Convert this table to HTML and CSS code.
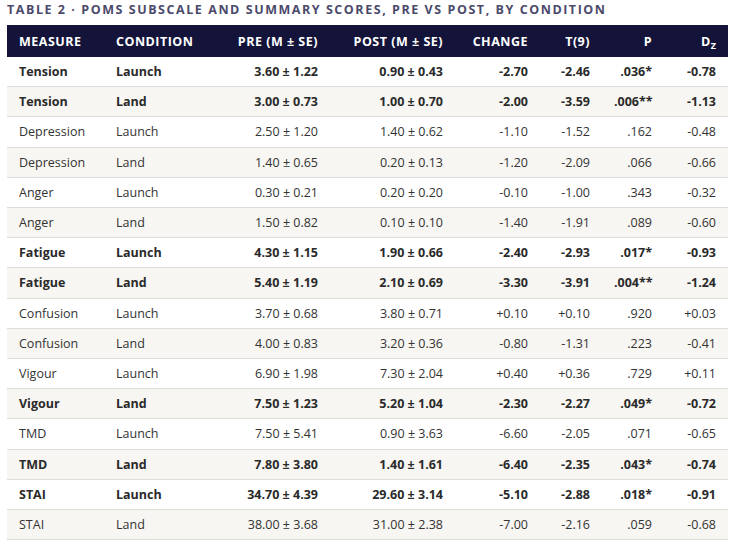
FILE: index.html
```html
<!DOCTYPE html>
<html>
<head>
<meta charset="utf-8">
<link rel="stylesheet" href="styles.css">
</head>
<body>
<div class="wrap">
<h1 class="title">TABLE 2 · POMS SUBSCALE AND SUMMARY SCORES, PRE VS POST, BY CONDITION</h1>
<table class="data">
<colgroup>
<col class="c1"><col class="c2"><col class="c3"><col class="c4"><col class="c5"><col class="c6"><col class="c7"><col class="c8">
</colgroup>
<thead>
<tr><th class="l">MEASURE</th><th class="l">CONDITION</th><th>PRE (M ± SE)</th><th>POST (M ± SE)</th><th>CHANGE</th><th>T(9)</th><th>P</th><th>D<sub>Z</sub></th></tr>
</thead>
<tbody>
<tr class="sig"><td class="l">Tension</td><td class="l">Launch</td><td>3.60 ± 1.22</td><td>0.90 ± 0.43</td><td>-2.70</td><td>-2.46</td><td>.036*</td><td>-0.78</td></tr>
<tr class="sig"><td class="l">Tension</td><td class="l">Land</td><td>3.00 ± 0.73</td><td>1.00 ± 0.70</td><td>-2.00</td><td>-3.59</td><td>.006**</td><td>-1.13</td></tr>
<tr><td class="l">Depression</td><td class="l">Launch</td><td>2.50 ± 1.20</td><td>1.40 ± 0.62</td><td>-1.10</td><td>-1.52</td><td>.162</td><td>-0.48</td></tr>
<tr><td class="l">Depression</td><td class="l">Land</td><td>1.40 ± 0.65</td><td>0.20 ± 0.13</td><td>-1.20</td><td>-2.09</td><td>.066</td><td>-0.66</td></tr>
<tr><td class="l">Anger</td><td class="l">Launch</td><td>0.30 ± 0.21</td><td>0.20 ± 0.20</td><td>-0.10</td><td>-1.00</td><td>.343</td><td>-0.32</td></tr>
<tr><td class="l">Anger</td><td class="l">Land</td><td>1.50 ± 0.82</td><td>0.10 ± 0.10</td><td>-1.40</td><td>-1.91</td><td>.089</td><td>-0.60</td></tr>
<tr class="sig"><td class="l">Fatigue</td><td class="l">Launch</td><td>4.30 ± 1.15</td><td>1.90 ± 0.66</td><td>-2.40</td><td>-2.93</td><td>.017*</td><td>-0.93</td></tr>
<tr class="sig"><td class="l">Fatigue</td><td class="l">Land</td><td>5.40 ± 1.19</td><td>2.10 ± 0.69</td><td>-3.30</td><td>-3.91</td><td>.004**</td><td>-1.24</td></tr>
<tr><td class="l">Confusion</td><td class="l">Launch</td><td>3.70 ± 0.68</td><td>3.80 ± 0.71</td><td>+0.10</td><td>+0.10</td><td>.920</td><td>+0.03</td></tr>
<tr><td class="l">Confusion</td><td class="l">Land</td><td>4.00 ± 0.83</td><td>3.20 ± 0.36</td><td>-0.80</td><td>-1.31</td><td>.223</td><td>-0.41</td></tr>
<tr><td class="l">Vigour</td><td class="l">Launch</td><td>6.90 ± 1.98</td><td>7.30 ± 2.04</td><td>+0.40</td><td>+0.36</td><td>.729</td><td>+0.11</td></tr>
<tr class="sig"><td class="l">Vigour</td><td class="l">Land</td><td>7.50 ± 1.23</td><td>5.20 ± 1.04</td><td>-2.30</td><td>-2.27</td><td>.049*</td><td>-0.72</td></tr>
<tr><td class="l">TMD</td><td class="l">Launch</td><td>7.50 ± 5.41</td><td>0.90 ± 3.63</td><td>-6.60</td><td>-2.05</td><td>.071</td><td>-0.65</td></tr>
<tr class="sig"><td class="l">TMD</td><td class="l">Land</td><td>7.80 ± 3.80</td><td>1.40 ± 1.61</td><td>-6.40</td><td>-2.35</td><td>.043*</td><td>-0.74</td></tr>
<tr class="sig"><td class="l">STAI</td><td class="l">Launch</td><td>34.70 ± 4.39</td><td>29.60 ± 3.14</td><td>-5.10</td><td>-2.88</td><td>.018*</td><td>-0.91</td></tr>
<tr><td class="l">STAI</td><td class="l">Land</td><td>38.00 ± 3.68</td><td>31.00 ± 2.38</td><td>-7.00</td><td>-2.16</td><td>.059</td><td>-0.68</td></tr>
</tbody>
</table>
</div>
</body>
</html>
```
FILE: styles.css
```css
html, body {
  margin: 0;
  padding: 0;
  background: #ffffff;
}
body {
  font-family: "Open Sans", "Liberation Sans", sans-serif;
  color: #333333;
}
.wrap {
  padding: 0 10px 0 7px;
}
.title {
  margin: 0;
  padding-top: 1px;
  height: 24px;
  font-size: 12.5px;
  line-height: 17px;
  font-weight: 700;
  letter-spacing: 1.55px;
  color: #4b4a6b;
}
.data {
  width: 721px;
  border-collapse: collapse;
  table-layout: fixed;
  font-size: 12.5px;
}
.c1 { width: 97px; }
.c2 { width: 104px; }
.c3 { width: 122px; }
.c4 { width: 125px; }
.c5 { width: 85px; }
.c6 { width: 62px; }
.c7 { width: 62px; }
.c8 { width: 64px; }
.data th {
  background: #14143a;
  color: #ffffff;
  font-weight: 700;
  font-size: 12.5px;
  letter-spacing: 0.5px;
  height: 32px;
  padding: 0 12px;
  text-align: right;
  white-space: nowrap;
}
.data th sub {
  font-size: 9px;
  vertical-align: -3px;
  line-height: 0;
  letter-spacing: 0;
}
.data td {
  padding: 6px 12px;
  line-height: 17.2px;
  text-align: right;
  white-space: nowrap;
  border-bottom: 1px solid #dedcd8;
}
.data .l {
  text-align: left;
}
.data tbody tr:nth-child(even) {
  background: #f7f6f2;
}
.data tr.sig td {
  font-weight: 700;
  color: #2a2a2a;
}
```
